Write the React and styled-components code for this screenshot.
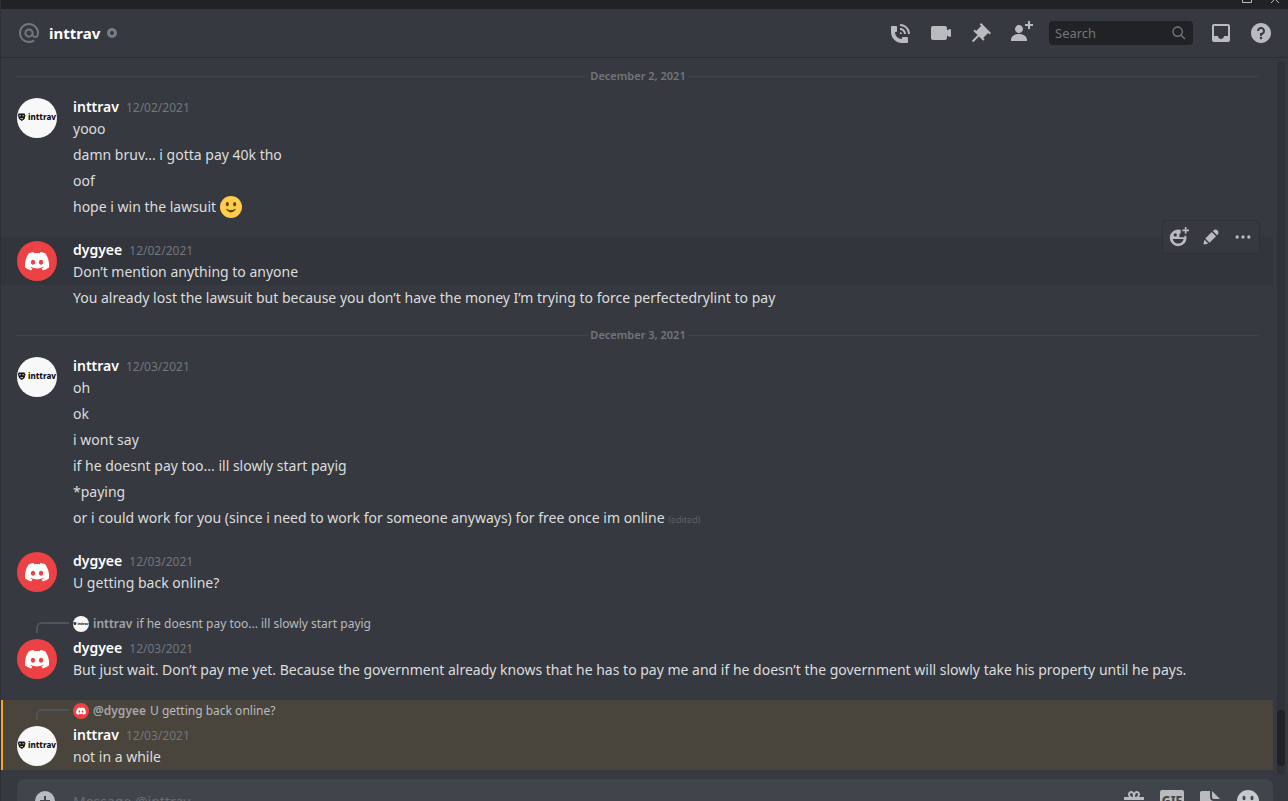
import React from "react";
import styled, { createGlobalStyle, css } from "styled-components";

const colors = {
  dark: "#202225",
  bg: "#36393f",
  hover: "#32353b",
  mention: "#49443c",
  mentionBar: "#faa61a",
  line: "#42454a",
  edge: "#2d3035",
  input: "#40444b",
  text: "#dcddde",
  muted: "#72767d",
  icon: "#b9bbbe",
  red: "#ed4245",
};

const GlobalStyle = createGlobalStyle`
  * {
    box-sizing: border-box;
  }

  body {
    margin: 0;
    background: ${colors.bg};
    color: ${colors.text};
    font-family: "Noto Sans", "Open Sans", sans-serif;
    font-size: 14px;
    line-height: 22px;
  }

  button {
    display: flex;
    align-items: center;
    justify-content: center;
    padding: 0;
    border: 0;
    background: none;
    color: inherit;
    font: inherit;
    cursor: pointer;
  }
`;

const Window = styled.div`
  display: flex;
  flex-direction: column;
  height: 100vh;
  overflow: hidden;
  border-left: 1px solid ${colors.edge};
`;

// window controls, only their lower edge is visible
const TitleBar = styled.div`
  display: flex;
  flex-shrink: 0;
  align-items: flex-start;
  justify-content: flex-end;
  gap: 18px;
  height: 9px;
  padding-right: 8px;
  background: ${colors.dark};
  color: ${colors.icon};
`;

const Header = styled.header`
  display: flex;
  flex-shrink: 0;
  align-items: center;
  height: 49px;
  padding: 0 15px 0 16px;
  border-bottom: 1px solid #2b2e33;
  color: ${colors.icon};
`;

const AtIcon = styled.span`
  display: flex;
  margin-right: 8px;
  color: ${colors.muted};
`;

const Title = styled.h1`
  margin: 0;
  color: #fff;
  font-size: 15px;
  font-weight: 700;
  line-height: 22px;
`;

const Status = styled.span`
  width: 10px;
  height: 10px;
  margin-left: 7px;
  border: 3px solid #747f8d;
  border-radius: 50%;
`;

const Toolbar = styled.div`
  display: flex;
  align-items: center;
  gap: 16px;
  margin-left: auto;
`;

const SearchBox = styled.label`
  display: flex;
  align-items: center;
  width: 144px;
  height: 24px;
  padding: 0 6px;
  border-radius: 4px;
  background: ${colors.dark};
  color: ${colors.muted};
`;

const SearchInput = styled.input`
  flex: 1;
  min-width: 0;
  padding: 0;
  border: 0;
  outline: 0;
  background: none;
  color: ${colors.text};
  font: inherit;
  font-size: 13px;

  &::placeholder {
    color: ${colors.muted};
    opacity: 1;
  }
`;

const Body = styled.div`
  display: flex;
  flex: 1;
  min-height: 0;
`;

const Messages = styled.main`
  flex: 1;
  min-width: 0;
  overflow: hidden;
  padding-top: 18px;
`;

// scrollbar
const Track = styled.div`
  display: flex;
  flex-direction: column;
  justify-content: flex-end;
  width: 8px;
  margin: 3px 3px 4px 4px;
  padding-bottom: 9px;
  border-radius: 4px;
  background: #2e3338;
`;

const Thumb = styled.div`
  height: 56px;
  border-radius: 4px;
  background: ${colors.dark};
`;

const Divider = styled.div`
  display: flex;
  align-items: center;
  height: 1px;
  margin: ${(props) => (props.$first ? "0" : "24px")} 14px 17px 16px;
  color: ${colors.muted};
  font-size: 11px;
  font-weight: 600;

  &::before,
  &::after {
    content: "";
    flex: 1;
    height: 1px;
    background: ${colors.line};
  }

  time {
    padding: 0 3px 2px;
    line-height: 13px;
  }
`;

const Group = styled.article`
  position: relative;
  display: grid;
  grid-template-columns: 40px 1fr;
  column-gap: 16px;
  padding: 2px 16px;

  & + & {
    margin-top: 17px;
  }

  ${(props) =>
    props.$hover &&
    css`
      background: ${colors.hover};
    `}

  ${(props) =>
    props.$mention &&
    css`
      background: ${colors.mention};
      box-shadow: inset 2px 0 0 ${colors.mentionBar};
    `}
`;

const Single = styled.div`
  padding: 2px 16px 2px 72px;

  & + ${Group} {
    margin-top: 17px;
  }
`;

const AvatarCell = styled.div`
  padding-top: 2px;

  svg {
    display: block;
  }
`;

const Meta = styled.header`
  display: flex;
  align-items: baseline;
  gap: 7px;
  height: 22px;

  time {
    color: ${colors.muted};
    font-size: 12px;
  }
`;

const Author = styled.strong`
  color: #fff;
  font-weight: 600;
`;

const Text = styled.p`
  margin: 0;
  height: 22px;
  white-space: nowrap;
`;

const Emoji = styled.svg`
  width: 22px;
  height: 22px;
  vertical-align: bottom;
`;

const Edited = styled.span`
  color: #5d6067;
  font-size: 9px;
`;

const Reply = styled.div`
  display: flex;
  grid-column: 1 / -1;
  align-items: center;
  height: 18px;
  margin-bottom: 4px;
  color: ${colors.icon};
  font-size: 12px;

  strong {
    margin: 0 4px;
    color: #a3a6aa;
    font-weight: 600;
  }
`;

const Spine = styled.span`
  align-self: flex-end;
  width: 33px;
  height: 11px;
  margin: 0 4px 0 19px;
  border: solid #4f545c;
  border-width: 2px 0 0 2px;
  border-top-left-radius: 6px;
`;

const Actions = styled.div`
  position: absolute;
  top: -17px;
  right: 13px;
  display: flex;
  height: 34px;
  border: 1px solid #2d3035;
  border-radius: 4px;
  background: ${colors.bg};
  color: ${colors.icon};

  button {
    width: 32px;
  }
`;

// the composer runs past the bottom of the window
const Composer = styled.form`
  flex-shrink: 0;
  height: 22px;
  padding: 0 15px 0 16px;
  overflow: hidden;
`;

const ComposerBox = styled.div`
  display: flex;
  align-items: center;
  height: 44px;
  padding: 0 13px 0 16px;
  border-radius: 8px;
  background: ${colors.input};
  color: ${colors.icon};

  button {
    width: 24px;
    margin-left: 14px;
  }

  button:first-child {
    margin: 0 16px 0 0;
  }
`;

const ComposerInput = styled.input`
  flex: 1;
  min-width: 0;
  height: 44px;
  padding: 0;
  border: 0;
  outline: 0;
  background: none;
  color: ${colors.text};
  font: inherit;

  &::placeholder {
    color: #686c73;
    opacity: 1;
  }
`;

const paths = {
  at: "M12 2C6.486 2 2 6.486 2 12C2 17.515 6.486 22 12 22C14.039 22 15.993 21.398 17.652 20.259L16.521 18.611C15.195 19.519 13.633 20 12 20C7.589 20 4 16.411 4 12C4 7.589 7.589 4 12 4C16.411 4 20 7.589 20 12V12.782C20 14.17 19.402 15 18.4 15L18.398 15.018C18.338 15.005 18.273 15 18.209 15H18C17.437 15 16.6 14.182 16.6 13.631V12C16.6 9.464 14.537 7.4 12 7.4C9.463 7.4 7.4 9.463 7.4 12C7.4 14.537 9.463 16.6 12 16.6C13.234 16.6 14.35 16.106 15.177 15.313C15.826 16.269 16.93 17 18 17L18.002 16.981C18.064 16.994 18.129 17 18.195 17H18.4C20.552 17 22 15.306 22 12.782V12C22 6.486 17.514 2 12 2ZM12 14.599C10.566 14.599 9.4 13.433 9.4 11.999C9.4 10.565 10.566 9.399 12 9.399C13.434 9.399 14.6 10.565 14.6 11.999C14.6 13.433 13.434 14.599 12 14.599Z",
  phone:
    "M11 5V3C16.515 3 21 7.486 21 13H19C19 8.589 15.411 5 11 5ZM17 13H15C15 10.795 13.206 9 11 9V7C14.309 7 17 9.691 17 13ZM11 11V13H13C13 11.896 12.105 11 11 11ZM14 16H18C18.553 16 19 16.447 19 17V21C19 21.553 18.553 22 18 22H13C6.925 22 2 17.075 2 11V6C2 5.447 2.448 5 3 5H7C7.553 5 8 5.447 8 6V10C8 10.553 7.553 11 7 11H6C6.063 14.938 9 18 13 18V17C13 16.447 13.447 16 14 16Z",
  video:
    "M21.526 8.149C21.231 7.966 20.862 7.951 20.553 8.105L18 9.382V7C18 5.897 17.103 5 16 5H4C2.897 5 2 5.897 2 7V17C2 18.104 2.897 19 4 19H16C17.103 19 18 18.104 18 17V14.618L20.553 15.894C20.694 15.965 20.847 16 21 16C21.183 16 21.365 15.949 21.526 15.851C21.82 15.668 22 15.347 22 15V9C22 8.653 21.82 8.332 21.526 8.149Z",
  pin: "M22 12L12.101 2.101L10.686 3.514L12.101 4.929L7.151 9.878V9.88L5.736 8.465L4.322 9.88L8.565 14.122L2.908 19.778L4.322 21.192L9.979 15.536L14.222 19.778L15.636 18.364L14.222 16.95L19.171 12H19.172L20.586 13.414L22 12Z",
  addFriend:
    "M21 3H24V5H21V8H19V5H16V3H19V0H21V3ZM10 12C12.205 12 14 10.205 14 8C14 5.795 12.205 4 10 4C7.795 4 6 5.795 6 8C6 10.205 7.795 12 10 12ZM10 13C5.289 13 2 15.467 2 19V20H18V19C18 15.467 14.711 13 10 13Z",
  search:
    "M21.707 20.293L16.314 14.9C17.403 13.504 18 11.799 18 10C18 7.863 17.167 5.854 15.656 4.344C14.146 2.832 12.137 2 10 2C7.863 2 5.854 2.832 4.344 4.344C2.833 5.854 2 7.863 2 10C2 12.137 2.833 14.146 4.344 15.656C5.854 17.168 7.863 18 10 18C11.799 18 13.504 17.404 14.9 16.314L20.293 21.706L21.707 20.293ZM10 16C8.397 16 6.891 15.376 5.758 14.243C4.624 13.11 4 11.603 4 10C4 8.398 4.624 6.891 5.758 5.758C6.891 4.624 8.397 4 10 4C11.603 4 13.109 4.624 14.242 5.758C15.376 6.891 16 8.398 16 10C16 11.603 15.376 13.11 14.242 14.243C13.109 15.376 11.603 16 10 16Z",
  inbox:
    "M19 3H4.99C3.88 3 3.01 3.89 3.01 5L3 19C3 20.1 3.88 21 4.99 21H19C20.1 21 21 20.1 21 19V5C21 3.89 20.1 3 19 3ZM19 15H15C15 16.66 13.65 18 12 18C10.35 18 9 16.66 9 15H4.99V5H19V15Z",
  help: "M12 2C6.486 2 2 6.487 2 12C2 17.515 6.486 22 12 22C17.514 22 22 17.515 22 12C22 6.487 17.514 2 12 2ZM12 18.25C11.31 18.25 10.75 17.691 10.75 17C10.75 16.31 11.31 15.75 12 15.75C12.69 15.75 13.25 16.31 13.25 17C13.25 17.691 12.69 18.25 12 18.25ZM13 13.875V15H11V12H12C13.104 12 14 11.103 14 10C14 8.896 13.104 8 12 8C10.896 8 10 8.896 10 10H8C8 7.795 9.795 6 12 6C14.205 6 16 7.795 16 10C16 11.861 14.723 13.429 13 13.875Z",
  pencil:
    "M19.293 9.83L19.941 9.183C21.353 7.771 21.353 5.472 19.941 4.059C18.529 2.647 16.229 2.647 14.817 4.059L14.17 4.707L19.293 9.83ZM12.896 5.977L5.185 13.691L10.309 18.813L18.02 11.099L12.896 5.977ZM4.119 20.97L8.759 19.811L4.187 15.239L3.027 19.88C2.95 20.186 3.04 20.511 3.263 20.734C3.487 20.957 3.812 21.046 4.119 20.97Z",
  more: "M7 12A2 2 0 1 1 3 12A2 2 0 1 1 7 12ZM14 12A2 2 0 1 1 10 12A2 2 0 1 1 14 12ZM21 12A2 2 0 1 1 17 12A2 2 0 1 1 21 12Z",
  react:
    "M19 0H21V3H24V5H21V8H19V5H16V3H19V0ZM13.5 3.3A10 10 0 1 0 20.8 11L18.5 10V12.3H12.500V8.500L14 7.500V3.300ZM7.500 7.500A2 2 0 1 1 7.500 11.500A2 2 0 1 1 7.500 7.500ZM4.500 14.300H17.500C17 17.500 14.500 19.800 11 19.800S5 17.500 4.500 14.300Z",
  plus: "M12 2A10 10 0 1 0 12 22A10 10 0 1 0 12 2ZM17 13H13V17H11V13H7V11H11V7H13V11H17Z",
  gift: "M2 8V11H22V8H16.9C17.6 7.3 18 6.4 18 5.5C18 3.5 16.5 2 14.7 2C13.5 2 12.5 2.7 12 4C11.5 2.7 10.5 2 9.3 2C7.5 2 6 3.5 6 5.5C6 6.4 6.4 7.3 7.1 8ZM9.3 4C10.3 4 11 5.5 11 8C9 8 8 6.8 8 5.5C8 4.6 8.5 4 9.3 4ZM14.7 4C15.5 4 16 4.6 16 5.5C16 6.8 15 8 13 8C13 5.5 13.7 4 14.7 4ZM3 12H11V22H5C3.9 22 3 21.1 3 20ZM13 12H21V20C21 21.1 20.1 22 19 22H13Z",
  sticker:
    "M4 2H12V8C12 10.5 13.5 12 16 12H22V20C22 21.1 21.1 22 20 22H4C2.9 22 2 21.1 2 20V4C2 2.9 2.9 2 4 2ZM14 2L22 10H16C14.9 10 14 9.1 14 8Z",
};

const Icon = ({ name, size = 24 }) => (
  <svg width={size} height={size} viewBox="0 0 24 24" aria-hidden="true">
    <path fill="currentColor" fillRule="evenodd" d={paths[name]} />
  </svg>
);

// 기본 아바타
const DiscordAvatar = ({ size }) => (
  <svg width={size} height={size} viewBox="0 0 40 40" aria-hidden="true">
    <circle cx="20" cy="20" r="20" fill={colors.red} />
    <path
      transform="translate(7 11) scale(0.93)"
      fill="#fff"
      d="M23.021 1.677C21.311.88 19.508.319 17.658 0C17.406.462 17.175.935 16.971 1.418C15.003 1.121 12.997 1.121 11.028 1.418C10.819.935 10.589.462 10.337.005C8.481.324 6.678.885 4.967 1.682C1.567 6.779.65 11.754 1.111 16.652C3.101 18.142 5.326 19.274 7.692 20C8.223 19.274 8.695 18.499 9.098 17.691C8.33 17.4 7.586 17.042 6.877 16.614C7.065 16.476 7.247 16.339 7.424 16.185C11.591 18.175 16.408 18.175 20.576 16.185C20.753 16.333 20.935 16.476 21.117 16.614C20.41 17.037 19.664 17.4 18.897 17.691C19.305 18.499 19.772 19.269 20.302 19.995C22.668 19.269 24.893 18.136 26.883 16.647H26.889C27.43 10.973 25.967 6.047 23.021 1.677ZM9.68 13.638C8.398 13.638 7.341 12.445 7.341 10.994C7.341 9.543 8.372 8.35 9.68 8.35C10.989 8.35 12.04 9.543 12.019 10.994C12.019 12.445 10.983 13.638 9.68 13.638ZM18.316 13.638C17.033 13.638 15.977 12.445 15.977 10.994C15.977 9.543 17.012 8.35 18.316 8.35C19.618 8.35 20.675 9.543 20.654 10.994C20.654 12.445 19.618 13.638 18.316 13.638Z"
    />
  </svg>
);

const InttravAvatar = ({ size }) => (
  <svg width={size} height={size} viewBox="0 0 40 40" aria-hidden="true">
    <circle cx="20" cy="20" r="20" fill="#f8f8f8" />
    <path
      fill="#111"
      d="M1.5 15.5H7.5L8.5 17.5L7.5 21L4.8 23L2 21L1 17.5Z"
    />
    <path stroke="#f8f8f8" strokeWidth="0.8" d="M2 17.8H4M5.3 17.8H7.3M3.3 20.6H6" />
    <text
      x="11"
      y="22"
      fill="#111"
      fontFamily="Noto Sans, sans-serif"
      fontSize="8"
      fontWeight="800"
    >
      inttrav
    </text>
  </svg>
);

const Avatar = ({ user, size = 40 }) =>
  user === "dygyee" ? <DiscordAvatar size={size} /> : <InttravAvatar size={size} />;

const Smile = () => (
  <Emoji viewBox="0 0 36 36" role="img" aria-label="slight smile">
    <circle cx="18" cy="18" r="18" fill="#ffcc4d" />
    <ellipse cx="12" cy="13.5" rx="2.5" ry="3.5" fill="#664500" />
    <ellipse cx="24" cy="13.5" rx="2.5" ry="3.5" fill="#664500" />
    <path
      fill="#664500"
      d="M10.5 21.3C10.2 21.7 10.3 22.2 10.6 22.6C10.8 22.7 13.5 27 18 27S25.2 22.7 25.4 22.6C25.7 22.2 25.8 21.7 25.5 21.3C25.2 21 24.7 20.9 24.3 21.1C24.2 21.2 21.8 23 18 23S11.8 21.2 11.7 21.1C11.3 20.9 10.8 21 10.5 21.3Z"
    />
  </Emoji>
);

const Message = ({ user, date, reply, hover, mention, children }) => (
  <Group $hover={hover} $mention={mention}>
    {reply && (
      <Reply>
        <Spine />
        <Avatar user={reply.user} size={16} />
        <strong>{reply.name}</strong>
        <span>{reply.text}</span>
      </Reply>
    )}
    <AvatarCell>
      <Avatar user={user} />
    </AvatarCell>
    <div>
      <Meta>
        <Author>{user}</Author>
        <time>{date}</time>
      </Meta>
      <Text>{children}</Text>
    </div>
    {hover && (
      <Actions>
        <button aria-label="Add reaction">
          <Icon name="react" size={20} />
        </button>
        <button aria-label="Edit">
          <Icon name="pencil" size={20} />
        </button>
        <button aria-label="More">
          <Icon name="more" size={20} />
        </button>
      </Actions>
    )}
  </Group>
);

const Line = ({ children }) => (
  <Single>
    <Text>{children}</Text>
  </Single>
);

const App = () => {
  return (
    <>
      <GlobalStyle />
      <Window>
        <TitleBar>
          <svg width="10" height="3" viewBox="0 0 10 3" aria-hidden="true">
            <path fill="none" stroke="currentColor" d="M0.5 0V2.5H9.5V0" />
          </svg>
          <svg width="10" height="3" viewBox="0 0 10 3" aria-hidden="true">
            <path fill="none" stroke="currentColor" d="M0 4L5 -1L10 4" />
          </svg>
        </TitleBar>

        <Header>
          <AtIcon>
            <Icon name="at" />
          </AtIcon>
          <Title>inttrav</Title>
          <Status />
          <Toolbar>
            <button aria-label="Call">
              <Icon name="phone" />
            </button>
            <button aria-label="Video call">
              <Icon name="video" />
            </button>
            <button aria-label="Pinned messages">
              <Icon name="pin" />
            </button>
            <button aria-label="Add friends">
              <Icon name="addFriend" />
            </button>
            <SearchBox>
              <SearchInput type="text" placeholder="Search" aria-label="Search" />
              <Icon name="search" size={16} />
            </SearchBox>
            <button aria-label="Inbox">
              <Icon name="inbox" />
            </button>
            <button aria-label="Help">
              <Icon name="help" />
            </button>
          </Toolbar>
        </Header>

        <Body>
          <Messages>
            <Divider $first>
              <time>December 2, 2021</time>
            </Divider>
            <Message user="inttrav" date="12/02/2021">
              yooo
            </Message>
            <Line>damn bruv... i gotta pay 40k tho</Line>
            <Line>oof</Line>
            <Line>
              hope i win the lawsuit <Smile />
            </Line>
            <Message user="dygyee" date="12/02/2021" hover>
              Don’t mention anything to anyone
            </Message>
            <Line>
              You already lost the lawsuit but because you don’t have the money
              I’m trying to force perfectedrylint to pay
            </Line>

            <Divider>
              <time>December 3, 2021</time>
            </Divider>
            <Message user="inttrav" date="12/03/2021">
              oh
            </Message>
            <Line>ok</Line>
            <Line>i wont say</Line>
            <Line>if he doesnt pay too... ill slowly start payig</Line>
            <Line>*paying</Line>
            <Line>
              or i could work for you (since i need to work for someone anyways)
              for free once im online <Edited>(edited)</Edited>
            </Line>
            <Message user="dygyee" date="12/03/2021">
              U getting back online?
            </Message>
            <Message
              user="dygyee"
              date="12/03/2021"
              reply={{
                user: "inttrav",
                name: "inttrav",
                text: "if he doesnt pay too... ill slowly start payig",
              }}
            >
              But just wait. Don’t pay me yet. Because the government already
              knows that he has to pay me and if he doesn’t the government will
              slowly take his property until he pays.
            </Message>
            <Message
              user="inttrav"
              date="12/03/2021"
              mention
              reply={{
                user: "dygyee",
                name: "@dygyee",
                text: "U getting back online?",
              }}
            >
              not in a while
            </Message>
          </Messages>
          <Track>
            <Thumb />
          </Track>
        </Body>

        <Composer>
          <ComposerBox>
            <button type="button" aria-label="Upload a file">
              <Icon name="plus" />
            </button>
            <ComposerInput
              type="text"
              placeholder="Message @inttrav"
              aria-label="Message @inttrav"
            />
            <button type="button" aria-label="Send a gift">
              <Icon name="gift" />
            </button>
            <button type="button" aria-label="Open GIF picker">
              <svg width="24" height="24" viewBox="0 0 24 24" aria-hidden="true">
                <rect y="1" width="24" height="22" rx="2" fill="currentColor" />
                <text
                  x="12"
                  y="16"
                  fill={colors.input}
                  textAnchor="middle"
                  fontSize="12"
                  fontWeight="800"
                >
                  GIF
                </text>
              </svg>
            </button>
            <button type="button" aria-label="Open sticker picker">
              <Icon name="sticker" />
            </button>
            <button type="button" aria-label="Select emoji">
              <svg width="24" height="24" viewBox="0 0 24 24" aria-hidden="true">
                <circle cx="12" cy="12" r="11" fill="#c8c9cb" />
                <ellipse cx="8" cy="9" rx="1.5" ry="2.2" fill={colors.input} />
                <ellipse cx="16" cy="9" rx="1.5" ry="2.2" fill={colors.input} />
                <path fill={colors.input} d="M6 14H18C17 17 15 18.5 12 18.5S7 17 6 14Z" />
              </svg>
            </button>
          </ComposerBox>
        </Composer>
      </Window>
    </>
  );
};

export default App;
